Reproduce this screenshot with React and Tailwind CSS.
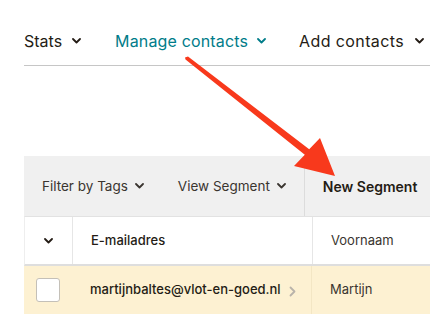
import React from "react";

const Chev = ({ className = "" }) => (
  <svg width="9" height="6" viewBox="0 0 9 6" className={className}>
    <polyline points="1,1 4.5,4.5 8,1" fill="none" stroke="currentColor" strokeWidth="1.8" strokeLinecap="round" strokeLinejoin="round" />
  </svg>
);

export default function App() {
  return (
    <div
      className="relative w-[430px] h-[314px] bg-white overflow-hidden text-[#241c15]"
      style={{ fontFamily: "Inter, 'Noto Sans', sans-serif" }}
    >
      {/* top nav */}
      <div className="ml-6 pt-[29px] pb-[12px] border-b border-[#c6c6c6] flex items-center text-[16px] leading-6">
        <div className="flex items-center gap-[10px]">
          <span>Stats</span>
          <Chev />
        </div>
        <div className="flex items-center gap-[9px] ml-[34px] text-[#007c89]">
          <span className="tracking-[0.15px]">Manage contacts</span>
          <Chev />
        </div>
        <div className="flex items-center gap-[11px] ml-[33px]">
          <span className="tracking-[0.4px]">Add contacts</span>
          <Chev />
        </div>
      </div>

      {/* filter bar */}
      <div className="ml-6 mt-[90px] h-[60px] bg-[#f0f0f0] flex items-stretch text-[13.5px] text-[#3a3530]">
        <div className="flex items-center pl-[18px] gap-[7px]">
          <span>Filter by Tags</span>
          <Chev />
        </div>
        <div className="flex items-center pl-[34px] pr-[18px] gap-[7px]">
          <span>View Segment</span>
          <Chev />
        </div>
        <div className="border-l border-[#dcdcdc] flex items-center pl-[18px] text-[14px] font-semibold text-[#241c15]">
          New Segment
        </div>
      </div>

      {/* table header */}
      <div className="ml-6 h-[50px] flex border-t border-[#e2e2e2] border-b-2 border-b-[#dedede] border-l border-l-[#eeeeee] text-[13px]">
        <div className="w-[48px] flex items-center justify-center border-r border-[#e6e6e6]">
          <Chev />
        </div>
        <div className="w-[240px] flex items-center pl-[18px] font-medium border-r border-[#e6e6e6]">
          E-mailadres
        </div>
        <div className="flex items-center pl-[18px] text-[#3a3530]">Voornaam</div>
      </div>

      {/* data row */}
      <div className="ml-6 h-[48px] flex bg-[#fdf1d2] text-[13px]">
        <div className="w-[48px] flex items-center justify-center">
          <div className="w-[24px] h-[24px] bg-white border border-[#c4c0b8] rounded-[3px]" />
        </div>
        <div className="w-[240px] flex items-center pl-[18px] font-medium gap-[8px] border-r border-[#f3e6c4]">
          <span>martijnbaltes@vlot-en-goed.nl</span>
          <svg width="7" height="11" viewBox="0 0 7 11" className="mt-[3px]">
            <polyline points="1.5,1.5 5.5,5.5 1.5,9.5" fill="none" stroke="#b9b3aa" strokeWidth="1.8" strokeLinecap="round" strokeLinejoin="round" />
          </svg>
        </div>
        <div className="flex items-center pl-[18px] text-[#3a3530]">Martijn</div>
      </div>

      {/* annotation arrow */}
      <svg className="absolute inset-0 pointer-events-none" width="430" height="314" viewBox="0 0 430 314">
        <polygon
          points="185.5,59.5 185,57.5 188,56.5 309.2,149.3 320,138 335,176 294,166 304.8,154.7"
          fill="#f8391c"
        />
      </svg>
    </div>
  );
}
